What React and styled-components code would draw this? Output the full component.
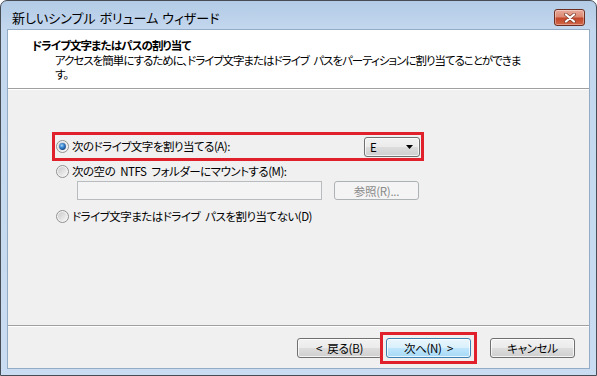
import React from 'react'
import styled, { createGlobalStyle } from 'styled-components'

const GlobalStyle = createGlobalStyle`
  html, body {
    margin: 0;
    padding: 0;
    background: #ffffff;
  }
  body {
    font-family: "Noto Sans CJK JP", "Noto Sans", sans-serif;
    font-size: 11.5px;
    letter-spacing: -0.5px;
    word-spacing: 3px;
    font-feature-settings: "palt";
    color: #000;
  }
`

const Window = styled.div`
  box-sizing: border-box;
  width: 597px;
  height: 376px;
  display: flex;
  flex-direction: column;
  border: 1px solid #474d55;
  border-radius: 7px 7px 0 0;
  padding: 0 6px 6px 6px;
  background: linear-gradient(180deg, #b3cbe6 0px, #c3d7ee 28px, #c6daf0 60%, #cadcf1 100%);
`

const TitleBar = styled.div`
  box-sizing: border-box;
  height: 28px;
  padding: 5px 5px 0 5px;
  display: flex;
  align-items: center;
  justify-content: space-between;
`

const TitleText = styled.div`
  font-size: 13px;
  line-height: 15px;
  letter-spacing: 0;
  word-spacing: 1px;
`

const CloseButton = styled.div`
  box-sizing: border-box;
  width: 31px;
  height: 17px;
  border: 1px solid #6e2f22;
  border-radius: 3px;
  display: flex;
  align-items: center;
  justify-content: center;
  background: linear-gradient(180deg, #e9a99a 0%, #dc8a74 45%, #c2462a 55%, #d3684a 100%);
  box-shadow: inset 0 0 0 1px rgba(255, 255, 255, 0.35);
`

const Client = styled.div`
  flex: 1;
  display: flex;
  flex-direction: column;
  border: 1px solid #94abc6;
  background: #f0f0f0;
`

const Header = styled.div`
  box-sizing: border-box;
  height: 59px;
  padding: 9px 0 0 24px;
  background: #ffffff;
  border-bottom: 1px solid #a0a0a0;
`

const HeaderTitle = styled.div`
  font-weight: bold;
  line-height: 13px;
  letter-spacing: -0.9px;
`

const HeaderSubtitle = styled.div`
  margin: 1px 0 0 23px;
  white-space: nowrap;
  letter-spacing: -1px;
`

const SubtitleLine = styled.div`
  height: 14px;
  line-height: 14px;
`

const Body = styled.div`
  flex: 1;
  padding: 46px 0 0 48px;
  border-top: 1px solid #ffffff;
`

const OptionList = styled.div`
  display: flex;
  flex-direction: column;
  width: 364px;
`

const OptionRow = styled.div`
  display: flex;
  align-items: center;
  justify-content: space-between;
  height: ${p => p.$tall ? '21px' : '15px'};
  margin-top: ${p => p.$gap || 0}px;
  outline: ${p => p.$highlight ? '3px solid #e0202a' : 'none'};
  outline-offset: 1px;
`

const RadioLabel = styled.label`
  display: flex;
  align-items: center;
  gap: 3px;
  line-height: 15px;
  white-space: nowrap;
`

const ComboBox = styled.div`
  box-sizing: border-box;
  width: 56px;
  height: 20px;
  padding: 0 6px 0 5px;
  display: flex;
  align-items: center;
  justify-content: space-between;
  border: 1px solid #707070;
  border-radius: 3px;
  background: linear-gradient(180deg, #f2f2f2 0%, #ebebeb 50%, #dddddd 51%, #cfcfcf 100%);
  box-shadow: inset 0 0 0 1px rgba(255, 255, 255, 0.7);
`

const MountRow = styled.div`
  display: flex;
  align-items: center;
  gap: 12px;
  margin: 2px 0 0 21px;
`

const PathInput = styled.div`
  box-sizing: border-box;
  width: 245px;
  height: 19px;
  border: 1px solid #b8bcbf;
  background: #f4f4f4;
`

const Button = styled.div`
  box-sizing: border-box;
  width: ${p => p.$width || 85}px;
  height: ${p => p.$height || 20}px;
  display: flex;
  align-items: center;
  justify-content: center;
  border-radius: 3px;
  white-space: nowrap;
  line-height: 14px;
  letter-spacing: -0.3px;
  color: ${p => p.$disabled ? '#8b8b8b' : '#000'};
  border: 1px solid ${p => p.$disabled ? '#adb2b5' : p.$default ? '#3c7fb1' : '#707070'};
  background: ${p => p.$disabled
    ? '#f4f4f4'
    : p.$default
      ? 'linear-gradient(180deg, #eaf6fd 0%, #d9f0fc 50%, #bee6fd 51%, #a7d9f5 100%)'
      : 'linear-gradient(180deg, #f2f2f2 0%, #ebebeb 50%, #dddddd 51%, #cfcfcf 100%)'};
  box-shadow: ${p => p.$disabled ? 'none' : 'inset 0 0 0 1px rgba(255, 255, 255, 0.75)'};
`

const Highlight = styled.div`
  display: flex;
  outline: 3px solid #e0202a;
  outline-offset: 3px;
`

const Footer = styled.div`
  display: flex;
  justify-content: flex-end;
  align-items: center;
  gap: 4px;
  padding: 12px 14px 10px 0;
  border-top: 1px solid #a0a0a0;
  box-shadow: inset 0 1px 0 #ffffff;
`

const FooterSpacer = styled.div`
  width: 11px;
`

const Radio = ({ checked }) => (
  <svg width="13" height="13" viewBox="0 0 13 13">
    <defs>
      <linearGradient id="rbg" x1="0" y1="0" x2="1" y2="1">
        <stop offset="0" stopColor="#cbcbcb" />
        <stop offset="1" stopColor="#f6f6f6" />
      </linearGradient>
      <radialGradient id="rdot" cx="0.4" cy="0.35" r="0.7">
        <stop offset="0" stopColor="#a9d6f8" />
        <stop offset="0.45" stopColor="#3a86d0" />
        <stop offset="1" stopColor="#123f7c" />
      </radialGradient>
    </defs>
    <circle cx="6.5" cy="6.5" r="6" fill="#f4f4f4" stroke="#8e8f8f" strokeWidth="1" />
    <circle cx="6.5" cy="6.5" r="4.5" fill="url(#rbg)" />
    {checked && <circle cx="6.5" cy="6.5" r="3.4" fill="url(#rdot)" />}
  </svg>
)

const CloseGlyph = () => (
  <svg width="12" height="10" viewBox="0 0 12 10">
    <path d="M2 1.5 L10 8.5 M10 1.5 L2 8.5" stroke="#7b3b2c" strokeWidth="3.6" strokeLinecap="round" />
    <path d="M2 1.5 L10 8.5 M10 1.5 L2 8.5" stroke="#ffffff" strokeWidth="2.2" strokeLinecap="round" />
  </svg>
)

const DownArrow = () => (
  <svg width="7" height="4" viewBox="0 0 7 4">
    <path d="M0 0 H7 L3.5 4 Z" fill="#000" />
  </svg>
)

export default function App() {
  return (
    <>
      <GlobalStyle />
      <Window>
        <TitleBar>
          <TitleText>新しいシンプル ボリューム ウィザード</TitleText>
          <CloseButton><CloseGlyph /></CloseButton>
        </TitleBar>
        <Client>
          <Header>
            <HeaderTitle>ドライブ文字またはパスの割り当て</HeaderTitle>
            <HeaderSubtitle>
              <SubtitleLine>アクセスを簡単にするために、ドライブ文字またはドライブ パスをパーティションに割り当てることができま</SubtitleLine>
              <SubtitleLine>す。</SubtitleLine>
            </HeaderSubtitle>
          </Header>
          <Body>
            <OptionList>
              <OptionRow $tall $highlight>
                <RadioLabel><Radio checked />次のドライブ文字を割り当てる(A):</RadioLabel>
                <ComboBox>E<DownArrow /></ComboBox>
              </OptionRow>
              <OptionRow $gap={7}>
                <RadioLabel><Radio />次の空の NTFS フォルダーにマウントする(M):</RadioLabel>
              </OptionRow>
              <MountRow>
                <PathInput />
                <Button $disabled $width={85} $height={19}>参照(R)...</Button>
              </MountRow>
              <OptionRow $gap={9}>
                <RadioLabel><Radio />ドライブ文字またはドライブ パスを割り当てない(D)</RadioLabel>
              </OptionRow>
            </OptionList>
          </Body>
          <Footer>
            <Button>&lt; 戻る(B)</Button>
            <Highlight>
              <Button $default>次へ(N) &gt;</Button>
            </Highlight>
            <FooterSpacer />
            <Button>キャンセル</Button>
          </Footer>
        </Client>
      </Window>
    </>
  )
}
